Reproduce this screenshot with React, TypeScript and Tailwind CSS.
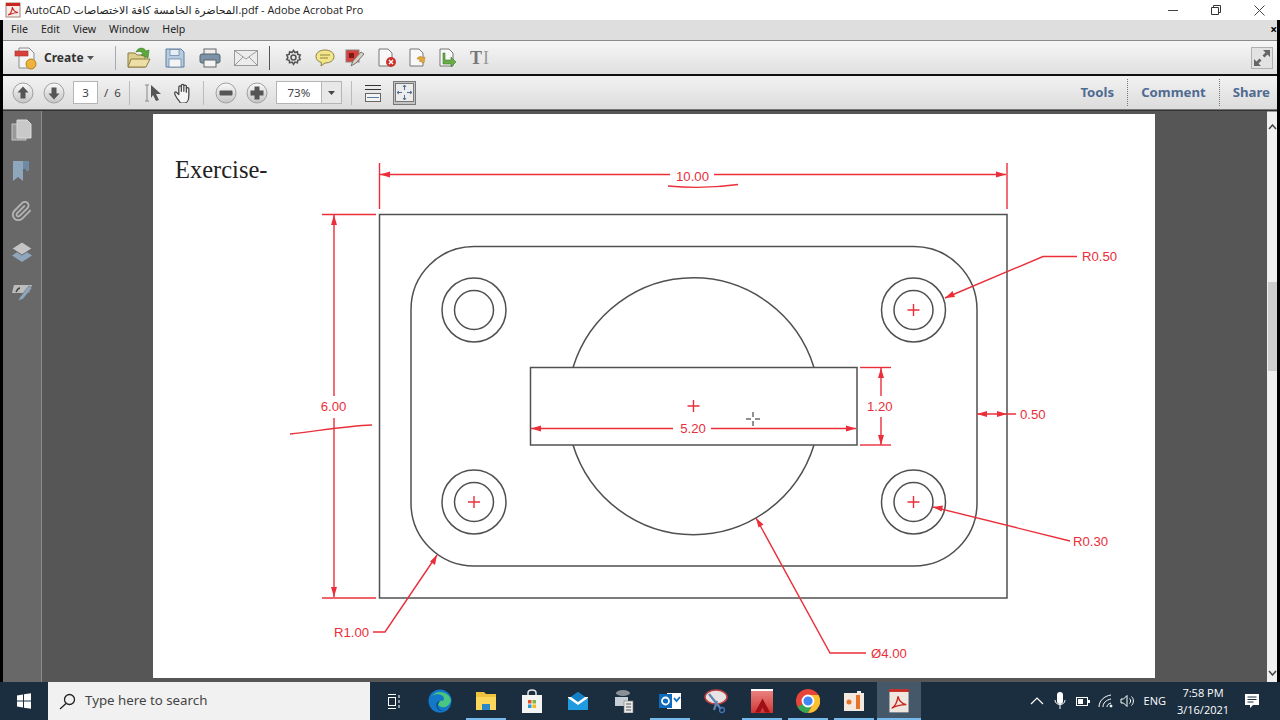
import React from "react";

const RED = "#ea2f3a";
const INK = "#505050";

function Pdf({ size = 16 }: { size?: number }) {
  return (
    <svg width={size} height={size} viewBox="0 0 16 16">
      <rect x="1" y="1" width="14" height="14" fill="#f6ece8" stroke="#a8827a" />
      <rect x="1" y="1" width="14" height="3" fill="#c8261e" />
      <path d="M3 13c3-1 4-4 4.500-8 .5 3 2 5 5.500 5.500-3 0-6 1-10 2.500z" fill="none" stroke="#c8261e" strokeWidth="1.200" />
    </svg>
  );
}

function RoundBtn({ kind }: { kind: "up" | "down" | "minus" | "plus" }) {
  return (
    <svg width="22" height="22" viewBox="0 0 22 22">
      <defs>
        <linearGradient id="rb" x1="0" y1="0" x2="0" y2="1">
          <stop offset="0" stopColor="#fafafa" />
          <stop offset="1" stopColor="#c4c4c4" />
        </linearGradient>
      </defs>
      <circle cx="11" cy="11" r="10" fill="url(#rb)" stroke="#a0a0a0" />
      {kind === "up" && <path d="M11 4.500l5.500 6h-3v6h-5v-6h-3z" fill="#555" />}
      {kind === "down" && <path d="M11 17.500l5.500-6h-3v-6h-5v6h-3z" fill="#555" />}
      {kind === "minus" && <rect x="4.500" y="8.500" width="13" height="5" rx="1" fill="#555" />}
      {kind === "plus" && <path d="M8.500 4.500h5v4h4v5h-4v4h-5v-4h-4v-5h4z" fill="#555" />}
    </svg>
  );
}

function Drawing() {
  const h = (x1: number, y1: number, x2: number, y2: number) => (
    <line x1={x1} y1={y1} x2={x2} y2={y2} />
  );
  const text = (x: number, y: number, s: string, anchor: "start" | "middle" = "start") => (
    <text x={x} y={y} textAnchor={anchor} fill={RED} stroke="none" fontSize="13.200" fontFamily="'Liberation Sans', sans-serif">
      {s}
    </text>
  );
  const plus = (x: number, y: number) => (
    <path d={`M${x - 6} ${y}h12M${x} ${y - 6}v12`} />
  );
  return (
    <svg className="block" width="1002" height="564" viewBox="153 114 1002 564">
      <text x="175" y="178" fontSize="24.500" fill="#222" fontFamily="'Liberation Serif', serif">Exercise-</text>
      <g fill="none" stroke={INK} strokeWidth="1.500">
        <rect x="379.500" y="214.500" width="627.500" height="383.500" />
        <rect x="411" y="246.500" width="566" height="319.500" rx="63" />
        {[[474, 310], [913.500, 310], [474, 502], [913.500, 502]].map(([x, y]) => (
          <g key={`${x}-${y}`}>
            <circle cx={x} cy={y} r="32" />
            <circle cx={x} cy={y} r="19.500" />
          </g>
        ))}
        <path d="M573 367.500A126.300 128 0 0 1 814 367.500M573 445A126.300 128 0 0 0 814 445" />
        <rect x="530.500" y="367.500" width="326.500" height="77.500" />
      </g>
      <g fill="none" stroke={RED} strokeWidth="1.400">
        {h(379.500, 163, 379.500, 209)}
        {h(1007, 163, 1007, 209)}
        {h(380, 174.500, 670, 174.500)}
        {h(714, 174.500, 1006, 174.500)}
        {h(322, 214.500, 376, 214.500)}
        {h(322, 598, 376, 598)}
        {h(334, 215, 334, 396)}
        {h(334, 418, 334, 597)}
        {h(531, 428.500, 673, 428.500)}
        {h(711, 428.500, 856, 428.500)}
        {h(860, 367.500, 891, 367.500)}
        {h(860, 445, 891, 445)}
        {h(881, 368, 881, 396)}
        {h(881, 417, 881, 445)}
        {h(977, 414, 1016, 414)}
        <path d="M945 298L1043 256.500H1077" />
        <path d="M933 507L1070 541" />
        <path d="M756 518L830 653H866" />
        <path d="M437 555L385 632H373" />
        <path d="M668 186c20 2 45 2 70-1.500" />
        <path d="M290 434c28-3 55-8 82-9" />
        {plus(693.500, 406)}
        {plus(913.500, 310)}
        {plus(474, 502)}
        {plus(913.500, 502)}
      </g>
      <g fill={RED}>
        <path d="M380 174.500l10-3v6z" />
        <path d="M1006 174.500l-10-3v6z" />
        <path d="M334 215l-3 10h6z" />
        <path d="M334 597l-3-10h6z" />
        <path d="M531 428.500l10-3v6z" />
        <path d="M856 428.500l-10-3v6z" />
        <path d="M881 368l-3 10h6z" />
        <path d="M881 445l-3-10h6z" />
        <path d="M977 414l10-3v6z" />
        <path d="M1007 414l-10-3v6z" />
        <path d="M945 298l7.500-7 2.500 6z" />
        <path d="M933 507l10-1.500-1.500 6z" />
        <path d="M756 518l7.500 6.500-5 3z" />
        <path d="M437 555l-2 10-5-3.500z" />
      </g>
      {text(692.500, 180.500, "10.00", "middle")}
      {text(333.500, 411, "6.00", "middle")}
      {text(693, 433, "5.20", "middle")}
      {text(867, 411, "1.20")}
      {text(1020, 418.500, "0.50")}
      {text(1082, 261, "R0.50")}
      {text(1073, 546, "R0.30")}
      {text(871, 658, "Ø4.00")}
      {text(334, 636.500, "R1.00")}
      <path d="M746 419h5M755 419h5M753 412v5M753 421v5" stroke="#222" strokeWidth="1" fill="none" />
    </svg>
  );
}

function TopIcons() {
  return (
    <>
      <svg className="ml-[11px]" width="24" height="24" viewBox="0 0 24 24">
        <path d="M5 2h10l5 5v15H5z" fill="#f5f5f5" stroke="#8a8a8a" />
        <rect x="1" y="5" width="13" height="5" fill="#d9403a" stroke="#a03030" strokeWidth=".6" />
        <circle cx="17" cy="18" r="5" fill="#eeb33a" stroke="#b98320" />
      </svg>
      <span className="ml-[6px] w-[38px] text-[12px] font-bold text-[#333]">Create</span>
      <svg className="ml-[5px]" width="7" height="4" viewBox="0 0 7 4"><path d="M0 0h7L3.500 4z" fill="#555" /></svg>
      <div className="ml-[21px] h-[24px] w-px bg-[#a9a9a9]" />
      <svg className="ml-[11px]" width="24" height="24" viewBox="0 0 24 24">
        <path d="M1 21V7h7l2 2h8v12z" fill="#dfcf8f" stroke="#8c7c40" />
        <path d="M1 21l3-8h19l-4 8z" fill="#eddfa6" stroke="#8c7c40" />
        <path d="M9 6c2-5 8-5 10-1l3-1-1 8-7-3 2-1c-1-3-4-3-7-2z" fill="#5da83a" stroke="#3b7a26" strokeWidth=".6" />
      </svg>
      <svg className="ml-[14px]" width="20" height="20" viewBox="0 0 20 20">
        <path d="M1 1h15l3 3v15H1z" fill="#b6cce0" stroke="#5f7f9e" />
        <rect x="5" y="1.500" width="9" height="6" fill="#e8eef3" stroke="#5f7f9e" strokeWidth=".7" />
        <rect x="4" y="11" width="12" height="8" fill="#f2f4f6" stroke="#5f7f9e" strokeWidth=".7" />
      </svg>
      <svg className="ml-[14px]" width="22" height="20" viewBox="0 0 22 20">
        <rect x="5" y="1" width="12" height="6" fill="#eee" stroke="#666" />
        <rect x="1" y="6" width="20" height="9" rx="2" fill="#7b92a8" stroke="#566" />
        <rect x="5" y="12" width="12" height="7" fill="#f4f4f4" stroke="#666" />
      </svg>
      <svg className="ml-[13px]" width="24" height="16" viewBox="0 0 24 16">
        <rect x=".5" y=".5" width="23" height="15" fill="#ececec" stroke="#9a9a9a" />
        <path d="M1 1l11 8 11-8M1 15l8-8M23 15l-8-8" fill="none" stroke="#9a9a9a" />
      </svg>
      <div className="ml-[11px] h-[24px] w-px bg-[#555]" />
      <svg className="ml-[15px]" width="17" height="17" viewBox="0 0 24 24" fill="none" stroke="#555" strokeWidth="2.200">
        <circle cx="12" cy="12" r="3.500" />
        <path d="M12 2l2 3 3.500-1 .5 3.500 3.500 1-1.500 3.500 1.500 3-3.500 1-.5 3.500-3.500-1-2 3-2-3-3.500 1-.5-3.500-3.500-1 1.500-3-1.500-3.500 3.500-1 .5-3.500 3.500 1z" />
      </svg>
      <svg className="ml-[13px]" width="20" height="18" viewBox="0 0 20 18">
        <path d="M10 1c5 0 9 2.500 9 6.500S15 14 10 14l-4 3 .5-3.500C3 12.500 1 10.500 1 7.500 1 3.500 5 1 10 1z" fill="#f3e58a" stroke="#8c8140" />
        <path d="M5 6h10M5 9h8" stroke="#8c8140" />
      </svg>
      <svg className="ml-[10px]" width="20" height="20" viewBox="0 0 20 20">
        <rect x="1" y="2" width="13" height="12" fill="#d8403c" stroke="#888" />
        <rect x="4" y="5" width="5" height="5" fill="#7c1a18" />
        <path d="M6 18l2-5 8-9 3 2-8 9z" fill="#d8d0c0" stroke="#777" />
      </svg>
      <svg className="ml-[12px]" width="20" height="20" viewBox="0 0 20 20">
        <path d="M2 1h9l4 4v13H2z" fill="#f8f8f8" stroke="#777" />
        <circle cx="14" cy="14" r="5" fill="#c8352f" />
        <path d="M12 12l4 4M16 12l-4 4" stroke="#fff" strokeWidth="1.400" />
      </svg>
      <svg className="ml-[11px]" width="20" height="20" viewBox="0 0 20 20">
        <path d="M2 1h9l4 4v13H2z" fill="#f8f8f8" stroke="#777" />
        <path d="M9 11c1-3 5-3 6-1l2-1-1 6-5-2 2-1c-1-1-3-1-4-1z" fill="#e5a93a" stroke="#a87818" strokeWidth=".5" />
      </svg>
      <svg className="ml-[10px]" width="20" height="20" viewBox="0 0 20 20">
        <path d="M2 1h9l4 4v13H2z" fill="#f8f8f8" stroke="#777" />
        <path d="M7 5v7h6v-3l5 5-5 5v-3H5V5z" fill="#67ad48" stroke="#3d7a28" strokeWidth=".6" />
      </svg>
      <span className="ml-[12px] text-[18px] leading-none font-bold text-[#777] font-['Liberation_Serif',serif]">T</span>
      <span className="ml-[1px] text-[18px] leading-none text-[#999] font-['Liberation_Serif',serif]">I</span>
      <div className="ml-auto mr-[4px] flex h-[22px] w-[22px] items-center justify-center border border-[#b0b0b0] bg-[#e2e2e2]">
        <svg width="18" height="18" viewBox="0 0 18 18" fill="#666">
          <path d="M17 1v7l-2.500-2.500-3 3-2-2 3-3L10 1zM1 17v-7l2.500 2.500 3-3 2 2-3 3L8 17z" />
        </svg>
      </div>
    </>
  );
}

function NavBar() {
  return (
    <>
      <div className="ml-[9px]"><RoundBtn kind="up" /></div>
      <div className="ml-[9px]"><RoundBtn kind="down" /></div>
      <div className="ml-[8px] flex h-[23px] w-[25px] items-center justify-center border border-[#b5b5b5] bg-white text-[11.500px] text-[#444]">3</div>
      <span className="ml-[6px] text-[11.500px] text-[#444]">/</span>
      <span className="ml-[6px] text-[11.500px] text-[#444]">6</span>
      <div className="ml-[8px] h-[24px] w-px bg-[#bbb]" />
      <svg className="ml-[14px]" width="18" height="18" viewBox="0 0 18 18">
        <path d="M1 1h4M3 1v16M1 17h4" stroke="#888" fill="none" />
        <path d="M7 1l10 9h-5l3 6-3 1-3-6-2 3z" fill="#555" />
      </svg>
      <svg className="ml-[11px]" width="20" height="20" viewBox="0 0 24 24" fill="#f5f5f5" stroke="#444" strokeWidth="1.500" strokeLinejoin="round">
        <path d="M7 21c-2-2-5-7-5-9s2-2 3 0l2 2V5c0-2 3-2 3 0v5-7c0-2 3-2 3 0v7-6c0-2 3-2 3 0v7-4c0-2 3-2 3 0v8c0 5-2 9-5 9H9z" />
      </svg>
      <div className="ml-[10px] h-[24px] w-px bg-[#bbb]" />
      <div className="ml-[11px]"><RoundBtn kind="minus" /></div>
      <div className="ml-[9px]"><RoundBtn kind="plus" /></div>
      <div className="ml-[8px] flex h-[23px] w-[66px] border border-[#b5b5b5] bg-white">
        <div className="flex flex-1 items-center justify-center text-[11.500px] text-[#444]">73%</div>
        <div className="flex w-[20px] items-center justify-center border-l border-[#b5b5b5] bg-[#e8e8e8]">
          <svg width="7" height="4" viewBox="0 0 7 4"><path d="M0 0h7L3.500 4z" fill="#444" /></svg>
        </div>
      </div>
      <div className="ml-[9px] h-[24px] w-px bg-[#bbb]" />
      <svg className="ml-[12px]" width="18" height="18" viewBox="0 0 18 18" fill="none">
        <path d="M1 1.500h16M1 5.500h16" stroke="#333" />
        <rect x="1.500" y="9.500" width="15" height="8" fill="#f4f4f4" stroke="#666" />
        <path d="M3 13.500h12" stroke="#5a7fa5" />
      </svg>
      <div className="ml-[11px] flex h-[24px] w-[23px] items-center justify-center border border-[#777] bg-[#c4c4c4]">
        <svg width="19" height="19" viewBox="0 0 19 19" fill="none">
          <rect x=".5" y=".5" width="18" height="18" fill="#ececec" stroke="#777" />
          <path d="M9.500 2v5M9.500 12v5M2 9.500h5M12 9.500h5M8 4l1.500-2L11 4M8 15l1.500 2 1.500-2M4 8L2 9.500 4 11M15 8l2 1.500L15 11" stroke="#4d6f94" />
        </svg>
      </div>
      <div className="ml-auto flex h-[27px] items-center pr-[7px] text-[13.200px] font-bold text-[#4f6b92]">
        <span className="mr-[13px]">Tools</span>
        <div className="h-full border-l border-dotted border-[#777]" />
        <span className="mx-[13px]">Comment</span>
        <div className="h-full border-l border-dotted border-[#777]" />
        <span className="ml-[13px]">Share</span>
      </div>
    </>
  );
}

function Sidebar() {
  return (
    <div className="flex w-[38px] shrink-0 flex-col items-center bg-[#686868] pt-[8px]">
      <svg className="mr-[2px]" width="21" height="22" viewBox="0 0 21 22">
        <rect x="1" y="5" width="14" height="16" fill="#999" stroke="#c4c4c4" />
        <path d="M6 1h10l4 4v14H6z" fill="#c9c9c9" stroke="#dadada" />
      </svg>
      <svg className="mr-[2px] mt-[19px]" width="18" height="22" viewBox="0 0 18 22">
        <path d="M1 1h10v20l-5-4-5 4z" fill="#8fa7bd" />
        <path d="M11 1h6v10h-3v-2h-3z" fill="#6f8aa3" />
      </svg>
      <svg className="mr-[1px] mt-[18px]" width="22" height="22" viewBox="0 0 24 24" fill="none" stroke="#b4b4b4" strokeWidth="2">
        <path d="m21.440 11.050-9.190 9.190a6 6 0 0 1-8.490-8.490l8.570-8.570A4 4 0 1 1 18 8.840l-8.590 8.570a2 2 0 0 1-2.830-2.830l8.490-8.480" />
      </svg>
      <svg className="mr-[1px] mt-[19px]" width="22" height="22" viewBox="0 0 22 22">
        <path d="M11 8l10 6.500L11 21 1 14.500z" fill="#8fa7bd" />
        <path d="M11 1l10 6.500L11 14 1 7.500z" fill="#c4c4c4" stroke="#686868" />
      </svg>
      <svg className="mr-[1px] mt-[21px]" width="22" height="18" viewBox="0 0 22 18">
        <path d="M3 1h18l-3 8H1z" fill="#bcbcbc" />
        <path d="M5 8c1-2 3-4 4-4" stroke="#444" strokeWidth="1.500" fill="none" />
        <path d="M7 17l2-4 9-11 3 2-9 11z" fill="#8fa7bd" stroke="#686868" strokeWidth=".6" />
      </svg>
    </div>
  );
}

function Scrollbar() {
  return (
    <div className="flex w-[10px] shrink-0 flex-col bg-[#f0f0f0]">
      <div className="flex h-[20px] items-end justify-center border-t border-[#999] pb-[1px]">
        <svg width="9" height="6" viewBox="0 0 9 6" fill="none" stroke="#444" strokeWidth="1.500"><path d="M1 5l3.500-4L8 5" /></svg>
      </div>
      <div className="ml-[1px] mt-[151px] h-[89px] bg-[#cdcdcd]" />
      <div className="flex flex-1 items-end justify-center pb-[6px]">
        <svg width="9" height="6" viewBox="0 0 9 6" fill="none" stroke="#444" strokeWidth="1.500"><path d="M1 1l3.500 4L8 1" /></svg>
      </div>
    </div>
  );
}

function TaskItem({ children, open }: { children: React.ReactNode; open?: boolean }) {
  return (
    <div className="relative flex h-full w-[46px] shrink-0 items-center justify-center">
      {children}
      {open && <div className="absolute bottom-0 left-[3px] right-[3px] h-[2px] bg-[#76b9ed]" />}
    </div>
  );
}

function Taskbar() {
  return (
    <div className="flex h-[38px] shrink-0 items-stretch bg-[#1b2e40]">
      <div className="flex w-[48px] shrink-0 items-center justify-center">
        <svg width="16" height="16" viewBox="0 0 16 16" fill="#fff"><path d="M1 2.500l6-1v6H1zM8 1.300l7-1v7.200H8zM1 8.500h6v6l-6-1zM8 8.500h7v7.200l-7-1z" /></svg>
      </div>
      <div className="flex w-[322px] shrink-0 items-center bg-[#f1f1f1] pl-[11px] text-[13.300px] text-[#444]">
        <svg width="17" height="17" viewBox="0 0 17 17" fill="none" stroke="#222" strokeWidth="1.300"><circle cx="10.500" cy="6.500" r="5" /><path d="M7 10.500L1 16" /></svg>
        <span className="ml-[9px]">Type here to search</span>
      </div>
      <div className="flex w-[47px] shrink-0 items-center justify-center">
        <svg width="14" height="15" viewBox="0 0 14 15" fill="none" stroke="#fff"><path d="M1 .5h8M1 14.500h8" /><rect x="1.500" y="3.500" width="7" height="8" /><path d="M12 1v3M12 6v3M12 11v3" /></svg>
      </div>
      <TaskItem>
        <svg width="24" height="24" viewBox="0 0 24 24">
          <circle cx="12" cy="12" r="11.500" fill="#1478c8" />
          <path d="M23 11C21 3 9 0 4 7c4-3 12-2 12 3 0 1-1 2-4 2-4 0-3 5 2 6 4 1 8-2 9-7z" fill="#49c67f" />
          <path d="M12 12c-3 0-5 3-3 7 1 2 3 3 5 3 2 0 3-.5 3-.5-5 1-8-3-7-6z" fill="#0c4f8c" />
        </svg>
      </TaskItem>
      <TaskItem open>
        <svg width="22" height="20" viewBox="0 0 22 20">
          <path d="M1 1h8l2 2h10v16H1z" fill="#f0c33c" />
          <path d="M1 6h20v13H1z" fill="#fbd75b" />
          <path d="M7 19v-6h8v6z" fill="#2b88c8" />
        </svg>
      </TaskItem>
      <TaskItem>
        <svg width="20" height="24" viewBox="0 0 20 24">
          <path d="M6 7V4c0-4 8-4 8 0v3" fill="none" stroke="#e8e8e8" strokeWidth="1.500" />
          <rect y="6" width="20" height="18" fill="#f4f4f4" />
          <rect x="6" y="11" width="3.500" height="3.500" fill="#e8502a" />
          <rect x="10.500" y="11" width="3.500" height="3.500" fill="#7eb83c" />
          <rect x="6" y="15.500" width="3.500" height="3.500" fill="#2a9ad8" />
          <rect x="10.500" y="15.500" width="3.500" height="3.500" fill="#f6ba1b" />
        </svg>
      </TaskItem>
      <TaskItem>
        <svg width="20" height="18" viewBox="0 0 20 18">
          <path d="M0 7L10 0l10 7v11H0z" fill="#1f9be0" />
          <path d="M0 6l10 7 10-7v-1H0z" fill="#fff" />
          <path d="M3 5L10 0l7 5-7 5z" fill="#1280c4" />
        </svg>
      </TaskItem>
      <TaskItem>
        <svg width="20" height="24" viewBox="0 0 20 24">
          <ellipse cx="9" cy="4" rx="7" ry="3" fill="#8a9098" />
          <rect x="1" y="8" width="13" height="9" fill="#c8ced6" />
          <rect x="10" y="12" width="9" height="12" fill="#e8e8e8" stroke="#777" strokeWidth=".6" />
          <path d="M12 15h5M12 18h5M12 21h5" stroke="#555" />
        </svg>
      </TaskItem>
      <TaskItem open>
        <svg width="22" height="22" viewBox="0 0 22 22">
          <rect x="8" y="3" width="14" height="16" fill="#fff" />
          <rect y="4" width="13" height="14" fill="#0f6cbd" />
          <circle cx="6.500" cy="11" r="3.500" fill="none" stroke="#fff" strokeWidth="1.800" />
          <path d="M15 8l2.500 3 3.500-4" fill="none" stroke="#0f6cbd" strokeWidth="1.800" />
        </svg>
      </TaskItem>
      <TaskItem>
        <svg width="26" height="26" viewBox="0 0 26 26">
          <ellipse cx="13" cy="9" rx="11" ry="7" fill="#e9e2e2" stroke="#c04040" strokeWidth="1.500" />
          <path d="M6 6l12 15M14 13l-3 9" stroke="#5f85b5" strokeWidth="2.200" fill="none" />
          <circle cx="19" cy="22" r="2.500" fill="none" stroke="#3f75b5" strokeWidth="1.300" />
        </svg>
      </TaskItem>
      <TaskItem open>
        <div className="flex h-[24px] w-[22px] items-end justify-center border-t-[2px] border-t-white bg-gradient-to-b from-[#e88080] to-[#d03030]">
          <svg width="15" height="15" viewBox="0 0 18 17"><path d="M9 0l9 17H12L9 11l-3 6H0z" fill="#a00f16" /></svg>
        </div>
      </TaskItem>
      <TaskItem open>
        <svg width="24" height="24" viewBox="0 0 24 24">
          <circle cx="12" cy="12" r="12" fill="#e8453a" />
          <path d="M12 12L1.600 18A12 12 0 0 0 12 24l6-12z" fill="#35a853" />
          <path d="M12 6h10.500A12 12 0 0 1 12 24l5.500-9.500z" fill="#fbc02d" />
          <circle cx="12" cy="12" r="5.500" fill="#4286f4" stroke="#fff" strokeWidth="1.800" />
        </svg>
      </TaskItem>
      <TaskItem open>
        <svg width="22" height="22" viewBox="0 0 22 22">
          <rect x="1" y="3" width="20" height="18" fill="#f3e9de" />
          <path d="M14 1h4v2h-4z" fill="#eee" />
          <circle cx="6" cy="12" r="2.500" fill="#e8722c" />
          <rect x="13" y="5" width="4" height="14" fill="#e8722c" />
        </svg>
      </TaskItem>
      <div className="relative flex h-full w-[44px] shrink-0 items-center justify-center bg-[#45586a]">
        <svg width="20" height="24" viewBox="0 0 22 26">
          <rect x=".5" y=".5" width="21" height="25" fill="#f0e6e0" />
          <rect width="22" height="3" fill="#c8261e" />
          <path d="M3 21c4-2 6-7 7-13 1 5 3 8 9 9-5 0-11 1-16 4z" fill="none" stroke="#c8261e" strokeWidth="1.500" />
        </svg>
        <div className="absolute bottom-0 left-0 right-0 h-[2px] bg-[#76b9ed]" />
      </div>
      <div className="ml-auto flex items-center pr-[20px] text-white">
        <svg width="14" height="8" viewBox="0 0 14 8" fill="none" stroke="#fff" strokeWidth="1.200"><path d="M1 7l6-6 6 6" /></svg>
        <svg className="ml-[10px]" width="12" height="18" viewBox="0 0 12 18" fill="none"><rect x="3" y="0" width="6" height="12" rx="3" fill="#fff" /><path d="M1 8c0 6 10 6 10 0M6 13v4" stroke="#fff" /></svg>
        <svg className="ml-[10px]" width="14" height="9" viewBox="0 0 14 9" fill="none"><rect x=".5" y=".5" width="11" height="8" stroke="#fff" /><rect x="2" y="2" width="5" height="5" fill="#fff" /><rect x="12" y="3" width="2" height="3" fill="#fff" /></svg>
        <svg className="ml-[8px]" width="15" height="14" viewBox="0 0 15 14" fill="none" stroke="#fff"><path d="M1 13C1 7 6 2 13 1M5 13c0-4 3-7 8-8M9 13c0-2 1-3 4-4" /><circle cx="13" cy="12" r="1" fill="#fff" /></svg>
        <svg className="ml-[7px]" width="15" height="14" viewBox="0 0 15 14" fill="none" stroke="#fff"><path d="M1 5h2.500L7 1.500v11L3.500 9H1zM9.500 4.500c1.500 1.500 1.500 3.500 0 5M11.500 2.500c2.500 2.500 2.500 6.500 0 9" /></svg>
        <span className="ml-[9px] text-[11px] font-['Open_Sans',sans-serif]">ENG</span>
        <div className="ml-[11px] flex w-[52px] flex-col items-center text-[11px] leading-[17px] font-['Open_Sans',sans-serif]">
          <span>7:58 PM</span>
          <span>3/16/2021</span>
        </div>
        <svg className="ml-[15px]" width="16" height="16" viewBox="0 0 16 16"><path d="M1 1h14v11H9l-3 3v-3H1z" fill="#fff" /><path d="M3.500 4h9M3.500 6.500h9M3.500 9h6" stroke="#1b2e40" /></svg>
      </div>
    </div>
  );
}

export default function App() {
  return (
    <div className="flex h-[720px] w-[1280px] flex-col overflow-hidden bg-black font-['Noto_Sans',sans-serif]">
      <div className="flex h-[20px] shrink-0 items-center bg-white pl-[5px] text-[#222]">
        <Pdf />
        <span className="ml-[4px] font-['Open_Sans','DejaVu_Sans',sans-serif] text-[10.900px]" dir="ltr">
          AutoCAD المحاضرة الخامسة كافة الاختصاصات.pdf - Adobe Acrobat Pro
        </span>
        <div className="ml-auto flex items-center pr-[15px]">
          <div className="h-px w-[10px] bg-[#444]" />
          <svg className="ml-[33px]" width="10" height="10" viewBox="0 0 10 10" fill="none" stroke="#333"><path d="M.5 2.500h7v7h-7zM2.500 2.500v-2h7v7h-2" /></svg>
          <svg className="ml-[33px]" width="11" height="11" viewBox="0 0 11 11" fill="none" stroke="#444"><path d="M.5.500l10 10M10.500.500l-10 10" /></svg>
        </div>
      </div>
      <div className="mx-[3px] flex h-[20px] shrink-0 items-center gap-[13px] bg-[#dedede] pl-[8px] text-[10.600px] text-[#222]">
        <span>File</span>
        <span>Edit</span>
        <span>View</span>
        <span>Window</span>
        <span>Help</span>
        <span className="ml-auto text-[12px] leading-none font-bold text-black">×</span>
      </div>
      <div className="mx-[3px] flex h-[36px] shrink-0 items-center border-t border-b-[2px] border-t-[#8a8a8a] border-b-[#111] bg-gradient-to-b from-[#f6f6f6] to-[#e0e0e0]">
        <TopIcons />
      </div>
      <div className="mx-[3px] flex h-[34px] shrink-0 items-center border-b border-[#777] bg-gradient-to-b from-[#f2f2f2] to-[#dcdcdc]">
        <NavBar />
      </div>
      <div className="mx-[3px] flex min-h-0 flex-1 border-t border-[#333]">
        <Sidebar />
        <div className="flex min-w-0 flex-1 justify-start border-l border-[#8a8a8a] bg-[#565656] pl-[111px] pt-[3px]">
          <div className="h-[564px] w-[1002px] bg-white">
            <Drawing />
          </div>
        </div>
        <Scrollbar />
      </div>
      <Taskbar />
    </div>
  );
}
